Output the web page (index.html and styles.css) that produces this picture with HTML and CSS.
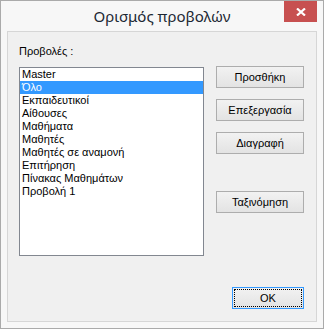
FILE: index.html
```html
<!DOCTYPE html>
<html lang="el">
<head>
    <meta charset="UTF-8">
    <title>Ορισμός προβολών</title>
    <link rel="stylesheet" href="styles.css">
</head>
<body>
    <div class="window">
        <div class="title-bar">
            <span class="title">Ορισμός προβολών</span>
            <div class="close-btn">
                <svg width="10" height="8" viewBox="0 0 10 8">
                    <path d="M1 0.5 L9 7.5 M9 0.5 L1 7.5" stroke="#fff" stroke-width="2.2" fill="none"/>
                </svg>
            </div>
        </div>
        <div class="client">
            <div class="label">Προβολές :</div>
            <div class="main-row">
                <ul class="listbox">
                    <li>Master</li>
                    <li class="selected">Όλο</li>
                    <li>Εκπαιδευτικοί</li>
                    <li>Αίθουσες</li>
                    <li>Μαθήματα</li>
                    <li>Μαθητές</li>
                    <li>Μαθητές σε αναμονή</li>
                    <li>Επιτήρηση</li>
                    <li>Πίνακας Μαθημάτων</li>
                    <li>Προβολή 1</li>
                </ul>
                <div class="side-buttons">
                    <button class="btn">Προσθήκη</button>
                    <button class="btn">Επεξεργασία</button>
                    <button class="btn">Διαγραφή</button>
                    <button class="btn sort-btn">Ταξινόμηση</button>
                </div>
            </div>
            <div class="footer">
                <button class="btn ok-btn">OK</button>
            </div>
        </div>
    </div>
</body>
</html>
```

FILE: styles.css
```css
body {
    margin: 0;
    font-family: 'Liberation Sans', Arial, sans-serif;
    font-size: 11px;
    color: #000;
    background: #fff;
}
.window {
    width: 324px;
    height: 329px;
    box-sizing: border-box;
    border: 1px solid #aaaaaa;
    background: #f7f7f7;
    padding: 0 6px 6px 6px;
    display: flex;
    flex-direction: column;
}
.title-bar {
    position: relative;
    height: 30px;
    display: flex;
    align-items: center;
    justify-content: center;
}
.title {
    font-family: 'Noto Sans', 'Open Sans', sans-serif;
    font-size: 15px;
    color: #1c2733;
    margin-top: -1px;
}
.close-btn {
    position: absolute;
    top: 0;
    right: 0;
    width: 33px;
    height: 21px;
    background: #c75050;
    display: flex;
    align-items: center;
    justify-content: center;
}
.client {
    flex: 1;
    border: 1px solid #d6d6d6;
    background: #f0f0f0;
    padding: 13px 11px 0 11px;
}
.label {
    line-height: 13px;
    height: 13px;
    margin-bottom: 8px;
}
.main-row {
    display: flex;
    align-items: flex-start;
}
.listbox {
    list-style: none;
    margin: 1px 0 0 0;
    padding: 0;
    width: 185px;
    height: 189px;
    box-sizing: border-box;
    border: 1px solid #828790;
    background: #fff;
}
.listbox li {
    height: 13px;
    line-height: 13px;
    padding-left: 2px;
    white-space: nowrap;
}
.listbox li.selected {
    background: #3399ff;
    color: #fff;
}
.side-buttons {
    margin-left: 12px;
    display: flex;
    flex-direction: column;
    gap: 11px;
}
.btn {
    width: 88px;
    height: 22px;
    box-sizing: border-box;
    border: 1px solid #adadad;
    background: linear-gradient(#f2f2f2, #e3e3e3);
    font-family: 'Liberation Sans', Arial, sans-serif;
    font-size: 11px;
    color: #000;
    padding: 0;
    margin: 0;
}
.sort-btn {
    margin-top: 26px;
}
.footer {
    display: flex;
    justify-content: flex-end;
    margin-top: 31px;
}
.ok-btn {
    width: 72px;
    margin-right: 1px;
    border-color: #3399ff;
    outline: 1px dotted #000;
    outline-offset: -3px;
}
```
